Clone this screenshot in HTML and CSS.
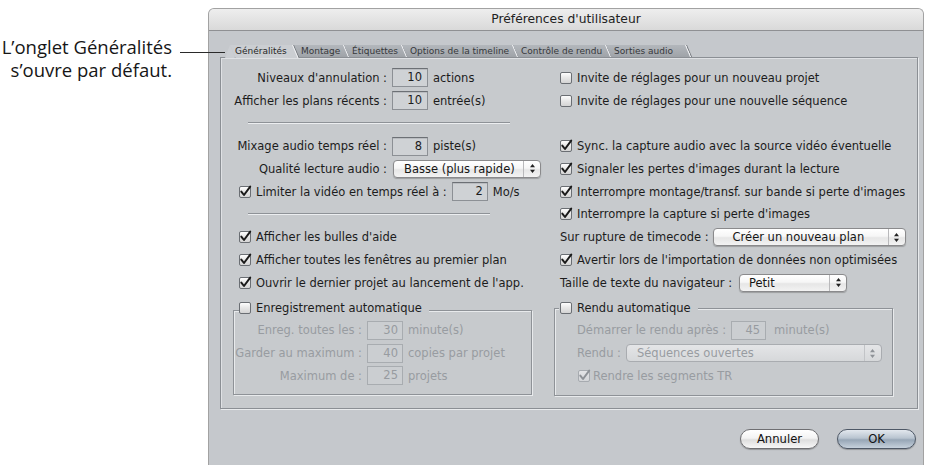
FILE: index.html
```html
<!DOCTYPE html>
<html lang="fr">
<head>
<meta charset="utf-8">
<title>Préférences d'utilisateur</title>
<link rel="stylesheet" href="styles.css">
</head>
<body>
<aside class="note">
  <p class="note-text">L’onglet Généralités<br>s’ouvre par défaut.</p>
  <span class="leader"></span>
</aside>
<main class="window">
  <header class="titlebar">Préférences d'utilisateur</header>
  <div class="wbody">
    <nav class="tabs">
      <span class="tab-corner"></span>
      <div class="tab tab-active"><span>Généralités</span></div>
      <div class="tab"><span>Montage</span></div>
      <div class="tab"><span>Étiquettes</span></div>
      <div class="tab"><span>Options de la timeline</span></div>
      <div class="tab"><span>Contrôle de rendu</span></div>
      <div class="tab tab-last"><span>Sorties audio</span></div>
    </nav>
    <section class="panel">
      <div class="col col-left">
        <div class="frow"><span class="lbl">Niveaux d'annulation :</span><span class="field">10</span><span>actions</span></div>
        <div class="frow"><span class="lbl">Afficher les plans récents :</span><span class="field">10</span><span>entrée(s)</span></div>
        <div class="sep"><i class="sep-line sep-a"></i></div>
        <div class="frow"><span class="lbl">Mixage audio temps réel :</span><span class="field">8</span><span>piste(s)</span></div>
        <div class="frow"><span class="lbl">Qualité lecture audio :</span><span class="popup popup-basse"><span class="ptext">Basse (plus rapide)</span><span class="parrows"><svg width="5" height="9" viewBox="0 0 5 9"><path d="M2.5 0 L5 3.2 H0Z M2.5 9 L5 5.8 H0Z" fill="#222"/></svg></span></span></div>
        <div class="crow crow-l"><span class="cb"><svg viewBox="0 0 12 12"><path d="M2.3 5.6 L5 9 L11.2 0.6"/></svg></span><span>Limiter la vidéo en temps réel à :</span><span class="field field-sm">2</span><span>Mo/s</span></div>
        <div class="sep"><i class="sep-line sep-b"></i></div>
        <div class="crow crow-l"><span class="cb"><svg viewBox="0 0 12 12"><path d="M2.3 5.6 L5 9 L11.2 0.6"/></svg></span><span>Afficher les bulles d'aide</span></div>
        <div class="crow crow-l"><span class="cb"><svg viewBox="0 0 12 12"><path d="M2.3 5.6 L5 9 L11.2 0.6"/></svg></span><span>Afficher toutes les fenêtres au premier plan</span></div>
        <div class="crow crow-l"><span class="cb"><svg viewBox="0 0 12 12"><path d="M2.3 5.6 L5 9 L11.2 0.6"/></svg></span><span>Ouvrir le dernier projet au lancement de l'app.</span></div>
        <div class="group group-l">
          <div class="ghead"><span class="cb"></span><span>Enregistrement automatique</span></div>
          <div class="grow dis"><span class="lbl">Enreg. toutes les :</span><span class="field field-sm field-dis">30</span><span>minute(s)</span></div>
          <div class="grow dis"><span class="lbl">Garder au maximum :</span><span class="field field-sm field-dis">40</span><span>copies par projet</span></div>
          <div class="grow dis"><span class="lbl">Maximum de :</span><span class="field field-sm field-dis">25</span><span>projets</span></div>
        </div>
      </div>
      <div class="col col-right">
        <div class="crow crow-r"><span class="cb"></span><span>Invite de réglages pour un nouveau projet</span></div>
        <div class="crow crow-r"><span class="cb"></span><span>Invite de réglages pour une nouvelle séquence</span></div>
        <div class="crow crow-r"></div>
        <div class="crow crow-r"><span class="cb"><svg viewBox="0 0 12 12"><path d="M2.3 5.6 L5 9 L11.2 0.6"/></svg></span><span>Sync. la capture audio avec la source vidéo éventuelle</span></div>
        <div class="crow crow-r"><span class="cb"><svg viewBox="0 0 12 12"><path d="M2.3 5.6 L5 9 L11.2 0.6"/></svg></span><span>Signaler les pertes d'images durant la lecture</span></div>
        <div class="crow crow-r"><span class="cb"><svg viewBox="0 0 12 12"><path d="M2.3 5.6 L5 9 L11.2 0.6"/></svg></span><span>Interrompre montage/transf. sur bande si perte d'images</span></div>
        <div class="crow crow-r"><span class="cb"><svg viewBox="0 0 12 12"><path d="M2.3 5.6 L5 9 L11.2 0.6"/></svg></span><span>Interrompre la capture si perte d'images</span></div>
        <div class="crow crow-r crow-pop"><span>Sur rupture de timecode :</span><span class="popup popup-rupture"><span class="ptext">Créer un nouveau plan</span><span class="parrows"><svg width="5" height="9" viewBox="0 0 5 9"><path d="M2.5 0 L5 3.2 H0Z M2.5 9 L5 5.8 H0Z" fill="#222"/></svg></span></span></div>
        <div class="crow crow-r"><span class="cb"><svg viewBox="0 0 12 12"><path d="M2.3 5.6 L5 9 L11.2 0.6"/></svg></span><span>Avertir lors de l'importation de données non optimisées</span></div>
        <div class="crow crow-r crow-pop crow-taille"><span>Taille de texte du navigateur :</span><span class="popup popup-taille"><span class="ptext">Petit</span><span class="parrows"><svg width="5" height="9" viewBox="0 0 5 9"><path d="M2.5 0 L5 3.2 H0Z M2.5 9 L5 5.8 H0Z" fill="#222"/></svg></span></span></div>
        <div class="group group-r">
          <div class="ghead"><span class="cb"></span><span>Rendu automatique</span></div>
          <div class="irow dis"><span>Démarrer le rendu après :</span><span class="field field-45 field-dis">45</span><span class="unit-wide">minute(s)</span></div>
          <div class="irow dis"><span>Rendu :</span><span class="popup popup-rendu dis-pop"><span class="ptext">Séquences ouvertes</span><span class="parrows"><svg width="5" height="9" viewBox="0 0 5 9"><path d="M2.5 0 L5 3.2 H0Z M2.5 9 L5 5.8 H0Z" fill="#8e9297"/></svg></span></span></div>
          <div class="irow dis irow-cb"><span class="cb cb-dis"><svg viewBox="0 0 12 12"><path d="M2.3 5.6 L5 9 L11.2 0.6"/></svg></span><span>Rendre les segments TR</span></div>
        </div>
      </div>
    </section>
    <div class="buttons">
      <button class="btn" type="button">Annuler</button>
      <button class="btn btn-default" type="button">OK</button>
    </div>
  </div>
</main>
</body>
</html>
```
FILE: styles.css
```css
* { box-sizing: border-box; }
html, body { margin: 0; padding: 0; }
body {
  width: 931px;
  height: 465px;
  overflow: hidden;
  background: #ffffff;
  display: flex;
  align-items: flex-start;
  font-family: "DejaVu Sans", Verdana, sans-serif;
  font-size: 11.5px;
  color: #1c1c1c;
}

/* annotation */
.note { position: relative; flex: none; width: 208px; height: 465px; }
.note-text {
  margin: 35px 36px 0 0;
  text-align: right;
  white-space: nowrap;
  font-family: "Open Sans", "Noto Sans", sans-serif;
  font-size: 18.5px;
  line-height: 23px;
  color: #161616;
}
.leader {
  position: absolute;
  left: 180px;
  top: 52px;
  width: 45px;
  height: 1px;
  background: #2a2a2a;
  z-index: 3;
}

/* window */
.window {
  flex: none;
  width: 716px;
  height: 470px;
  margin-top: 8px;
  border: 1px solid #a2a2a2;
  border-bottom: none;
  border-radius: 6px 6px 0 0;
  background: #c5c8cc;
  overflow: hidden;
}
.titlebar {
  height: 22px;
  border-bottom: 1px solid #8f9093;
  background: linear-gradient(#eeeeee, #d9d9d9);
  text-align: center;
  font-size: 12.3px;
  line-height: 21px;
  color: #222;
}
.wbody { padding: 14px 5px 0 11px; }

/* tabs */
.tabs {
  display: flex;
  align-items: flex-start;
  height: 12px;
  margin-left: 5px;
  font-size: 9px;
}
.tab-corner {
  flex: none;
  width: 0;
  height: 0;
  border-left: 5px solid transparent;
  border-right: 5px solid transparent;
  border-bottom: 13px solid #cbced2;
  margin-right: -5px;
  position: relative;
  z-index: 2;
}
.tab {
  flex: none;
  height: 12px;
  transform: skewX(23deg);
  transform-origin: 0 0;
  background: linear-gradient(#b3b7bc, #9fa3a8);
  border-right: 1px solid #f1f2f4;
  box-shadow: 1px 0 0 #74787d;
  padding: 0 3px 0 8px;
  color: #36383b;
  line-height: 12px;
  white-space: nowrap;
}
.tab span { display: block; transform: skewX(-23deg); transform-origin: 0 0; }
.tab-active {
  position: relative;
  z-index: 1;
  height: 13px;
  background: #cbced2;
  padding: 0 5px 0 5px;
  color: #262626;
}
.tab-last { padding-right: 12px; }

/* panel */
.panel {
  display: flex;
  height: 352px;
  border: 1px solid #8b8f94;
  box-shadow: inset 1px 1px 0 #dfe1e4, 1px 1px 0 #e9ebed;
  background: #c7cacd;
  padding-top: 8.6px;
}
.col { display: flex; flex-direction: column; }
.col-left { width: 324px; flex: none; }
.col-right { flex: 1; }

.frow {
  display: grid;
  grid-template-columns: 166px max-content max-content;
  column-gap: 5px;
  align-items: center;
  height: 22.75px;
  white-space: nowrap;
}
.lbl { text-align: right; }

.crow {
  display: flex;
  align-items: center;
  gap: 5px;
  height: 22.75px;
  white-space: nowrap;
}
.crow-l { padding-left: 18px; }
.crow-r { padding-left: 15px; }
.crow-pop { gap: 4px; }
.crow-taille { gap: 7px; }

.sep { height: 22.75px; display: flex; align-items: center; }
.sep-line {
  display: block;
  height: 2px;
  border-top: 1px solid #8e9297;
  border-bottom: 1px solid #eceef0;
  margin-left: 27px;
}
.sep-a { width: 262px; }
.sep-b { width: 242px; }

/* checkbox */
.cb {
  flex: none;
  width: 12px;
  height: 12px;
  border: 1px solid #6a6e73;
  border-radius: 2px;
  background: linear-gradient(#fdfdfd, #e6e6e6 50%, #d4d4d4);
}
.cb svg {
  display: block;
  width: 12px;
  height: 12px;
  margin: -1px 0 0 -1px;
  overflow: visible;
}
.cb svg path { fill: none; stroke: #1a1a1a; stroke-width: 2; stroke-linecap: round; stroke-linejoin: round; }
.cb-dis { border-color: #a7abb0; background: linear-gradient(#e3e4e6, #d3d5d8); }
.cb-dis svg path { stroke: #8d9196; }

/* text field */
.field {
  display: block;
  width: 36px;
  height: 19px;
  border: 1px solid #8c9095;
  border-top-color: #6c7075;
  background: #cfd2d5;
  box-shadow: inset 0 1px 0 #b9bcc0;
  text-align: right;
  padding-right: 5px;
  line-height: 17px;
  color: #1c1c1c;
}
.field-sm { padding-right: 4px; }
.field-dis {
  border-color: #a8acb0;
  box-shadow: none;
  background: #cbced1;
  color: #979ba0;
}
.field-45 { width: 35px; }

/* popup button */
.popup {
  display: flex;
  align-items: center;
  height: 18px;
  border: 1px solid #8a8a8c;
  border-radius: 4px;
  background: linear-gradient(#ffffff 0%, #f6f6f6 45%, #e6e6e6 55%, #f3f3f3 100%);
  box-shadow: 0 1px 1px rgba(0, 0, 0, 0.22);
  color: #151515;
}
.ptext { flex: 1; padding-left: 9px; line-height: 16px; white-space: nowrap; }
.parrows {
  flex: none;
  width: 17px;
  height: 100%;
  border-left: 1px solid #b9b9bb;
  display: flex;
  align-items: center;
  justify-content: center;
}
.parrows svg { display: block; }
.popup-basse { width: 148px; margin-left: 1px; }
.popup-basse .ptext { padding-left: 10px; }
.popup-rupture { width: 193px; }
.popup-rupture .ptext { padding-left: 19px; }
.popup-taille { width: 108px; }
.popup-rendu { width: 256px; }
.popup-rendu .ptext { padding-left: 10px; }
.dis-pop {
  border-color: #a9acb0;
  background: linear-gradient(#e4e5e7, #d6d8da);
  box-shadow: none;
  color: #989ca1;
}
.dis-pop .parrows { border-left-color: #c2c4c7; }

/* groups */
.group {
  border: 1px solid #8e9297;
  box-shadow: inset 1px 1px 0 #e8eaec, 1px 1px 0 #e8eaec;
}
.group-l { margin: 16px 13px 0 12px; padding-bottom: 6.5px; }
.group-r { margin: 14px 24px 0 9px; padding-bottom: 8px; }
.ghead {
  display: flex;
  align-items: center;
  gap: 5px;
  width: max-content;
  height: 22px;
  margin: -14px 0 0 5px;
  padding: 0 7px 0 0;
  background: #c7cacd;
  white-space: nowrap;
}
.group-r .ghead { margin-top: -12px; margin-left: 4px; padding-left: 1px; }
.grow {
  display: grid;
  grid-template-columns: 128px 36px max-content;
  column-gap: 5px;
  align-items: center;
  height: 22.75px;
  white-space: nowrap;
}
.dis { color: #989ca1; }
.irow {
  display: flex;
  align-items: center;
  gap: 5px;
  height: 22.75px;
  padding-left: 22px;
  white-space: nowrap;
}
.irow-cb { padding-left: 23px; gap: 3px; }
.unit-wide { margin-left: 3px; }

/* buttons */
.buttons {
  display: flex;
  justify-content: flex-end;
  gap: 18px;
  margin-top: 20px;
  padding-right: 2px;
}
.btn {
  width: 79px;
  height: 20px;
  padding: 0;
  border-radius: 10px;
  border: 1px solid #6f6f72;
  background: linear-gradient(#ffffff, #f3f3f3 45%, #dedede 55%, #f7f7f7);
  box-shadow: 0 1px 1px rgba(0, 0, 0, 0.25);
  font-family: inherit;
  font-size: 11.6px;
  color: #111;
}
.btn-default {
  border-color: #4e5866;
  background: linear-gradient(#e3e8ee, #b9c4d0 45%, #97a6b6 55%, #c6d1dc);
}
```
